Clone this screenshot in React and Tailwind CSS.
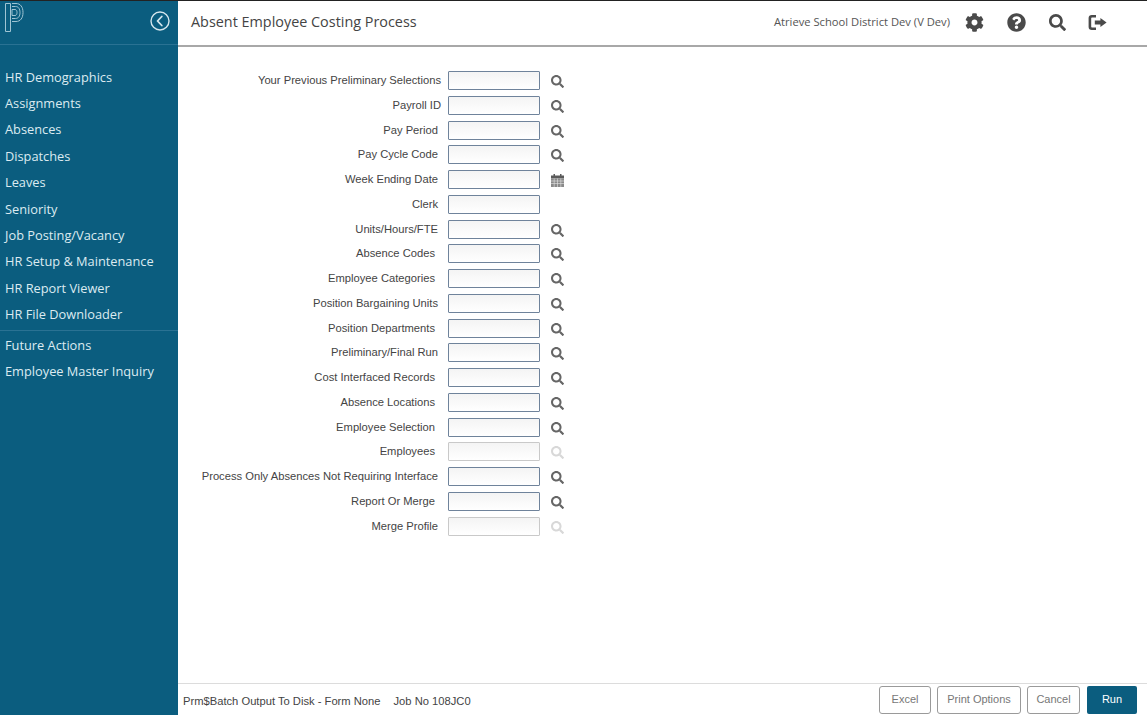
import React from 'react';
import { FaCog, FaQuestionCircle, FaSearch } from 'react-icons/fa';

const navTop = ['HR Demographics', 'Assignments', 'Absences', 'Dispatches', 'Leaves', 'Seniority', 'Job Posting/Vacancy', 'HR Setup & Maintenance', 'HR Report Viewer', 'HR File Downloader'];
const navBottom = ['Future Actions', 'Employee Master Inquiry'];

// pad = gap between label and input, it shifts a few px in the original
const fields = [
    { label: 'Your Previous Preliminary Selections', pad: 'pr-[7px]' },
    { label: 'Payroll ID', pad: 'pr-[7px]' },
    { label: 'Pay Period', pad: 'pr-[10px]' },
    { label: 'Pay Cycle Code', pad: 'pr-[10px]' },
    { label: 'Week Ending Date', pad: 'pr-[10px]', icon: 'calendar' },
    { label: 'Clerk', pad: 'pr-[10px]', icon: 'none' },
    { label: 'Units/Hours/FTE', pad: 'pr-[10px]' },
    { label: 'Absence Codes', pad: 'pr-[13px]' },
    { label: 'Employee Categories', pad: 'pr-[13px]' },
    { label: 'Position Bargaining Units', pad: 'pr-[10px]' },
    { label: 'Position Departments', pad: 'pr-[13px]' },
    { label: 'Preliminary/Final Run', pad: 'pr-[10px]' },
    { label: 'Cost Interfaced Records', pad: 'pr-[13px]' },
    { label: 'Absence Locations', pad: 'pr-[13px]' },
    { label: 'Employee Selection', pad: 'pr-[13px]' },
    { label: 'Employees', pad: 'pr-[13px]', disabled: true },
    { label: 'Process Only Absences Not Requiring Interface', pad: 'pr-[10px]' },
    { label: 'Report Or Merge', pad: 'pr-[13px]' },
    { label: 'Merge Profile', pad: 'pr-[10px]', disabled: true },
];

const Logo = () => (
    <svg width="20" height="32" viewBox="0 0 20 32" fill="none" stroke="#9fc4d3" strokeWidth="1">
        <path d="M1.5 2.5V30.5H6.5V2.5Z" />
        <path d="M8 2.5H12C16.5 2.5 19 6 19 11.5C19 17 16.5 20.5 12 20.5H8" />
        <path d="M8 5.5H11.5C14.5 5.5 16 8 16 11.5C16 15 14.5 17.5 11.5 17.5H8" />
        <path d="M8 8.5H11C12.5 8.5 13 10 13 11.5C13 13 12.5 14.5 11 14.5H8Z" />
    </svg>
);

const BackCircle = () => (
    <svg width="20" height="20" viewBox="0 0 20 20" fill="none" stroke="#d5e6ed">
        <circle cx="10" cy="10" r="9" strokeWidth="1.4" />
        <path d="M11.8 5.5L7.5 10L11.8 14.5" strokeWidth="1.8" strokeLinecap="round" strokeLinejoin="round" />
    </svg>
);

const SignOut = () => (
    <svg width="20" height="18" viewBox="0 0 20 18" fill="#4a4a4a">
        <path d="M8 1H3.8C1.8 1 .6 2.2.6 4V13C.6 14.8 1.8 16 3.8 16H8V13.4H4.3C3.6 13.4 3.2 13 3.2 12.4V4.6C3.2 4 3.6 3.6 4.3 3.6H8Z" />
        <path d="M12.4 4L18.6 8.5L12.4 13V10.5H6.8V6.5H12.4Z" />
    </svg>
);

const CalendarIcon = () => (
    <svg width="13" height="13" viewBox="0 0 13 13">
        <path d="M2.5 0H4V1.5H9V0H10.5V1.5H13V4.5H0V1.5H2.5Z" fill="#5a5a5a" />
        <rect x="0" y="4.5" width="13" height="8.5" fill="#8a8a8a" />
        <path d="M0 7H13M0 9.5H13M3.2 4.5V13M6.5 4.5V13M9.8 4.5V13" stroke="#e4e4e4" strokeWidth=".6" />
    </svg>
);

const Field = ({ label, pad, icon = 'search', disabled }) => (
    <div className="flex h-[24.78px] items-start">
        <label className={`w-[270px] pt-px text-right text-[11.2px] leading-[17px] text-[#444] ${pad}`}>{label}</label>
        <input
            disabled={disabled}
            className={`h-[19px] w-[92px] rounded-[1px] border bg-gradient-to-b from-[#f4f4f4] to-white ${disabled ? 'border-[#c9c9c9]' : 'border-[#6f839b]'}`}
        />
        <div className="ml-[10px] flex h-[21px] w-[15px] items-center justify-center">
            {icon === 'search' && <FaSearch size={13} className={disabled ? 'text-[#d8d8d8]' : 'text-[#666]'} />}
            {icon === 'calendar' && <CalendarIcon />}
        </div>
    </div>
);

const FooterButton = ({ children, className }) => (
    <button className={`h-[28px] rounded-[3px] border border-[#9a9a9a] bg-white text-[11px] text-[#777] ${className}`}>
        {children}
    </button>
);

const App = () => {
    return (
        <div className="flex h-screen w-full flex-col overflow-hidden bg-white font-['Liberation_Sans',sans-serif]">
            <div className="h-px w-full bg-[#222]" />
            <div className="flex min-h-0 flex-1">
                <aside className="flex w-[178px] shrink-0 flex-col bg-[#0b5d7f] font-['Open_Sans',sans-serif] text-[12.8px] font-medium text-[#dcebf1]">
                    <div className="flex h-[44px] items-start justify-between border-b border-[#2a7293] pl-[4px] pr-[8px]">
                        <Logo />
                        <div className="mt-[10px]"><BackCircle /></div>
                    </div>
                    <nav className="border-b border-[#2a7293] pt-[19px] pb-[2px]">
                        {navTop.map((item) => (
                            <div key={item} className="flex h-[26.4px] items-center pl-[5px]">{item}</div>
                        ))}
                    </nav>
                    <nav className="pt-[1px]">
                        {navBottom.map((item) => (
                            <div key={item} className="flex h-[26.4px] items-center pl-[5px]">{item}</div>
                        ))}
                    </nav>
                </aside>

                <main className="flex min-w-0 flex-1 flex-col">
                    <header className="flex h-[46px] shrink-0 items-center border-b-2 border-[#a8a8a8] pl-[13px] pr-[39px] font-['Open_Sans',sans-serif]">
                        <h1 className="mb-[3px] text-[14.4px] text-[#444]">Absent Employee Costing Process</h1>
                        <div className="mb-[1px] ml-auto flex items-center text-[#4a4a4a]">
                            <span className="mr-[15px] text-[11.2px] text-[#555]">Atrieve School District Dev (V Dev)</span>
                            <FaCog size={19} />
                            <FaQuestionCircle size={19} className="ml-[23px]" />
                            <FaSearch size={17} className="ml-[23px]" />
                            <div className="ml-[22px]"><SignOut /></div>
                        </div>
                    </header>

                    <section className="min-h-0 flex-1 pt-[24px]">
                        {fields.map((f) => (
                            <Field key={f.label} {...f} />
                        ))}
                    </section>

                    <footer className="flex h-[32px] shrink-0 items-center border-t border-[#dcdcdc] pl-[5px] pr-[10px] text-[11.2px] text-[#444]">
                        <span className="mt-[3px]">Prm$Batch Output To Disk - Form None</span>
                        <span className="ml-[13px] mt-[3px]">Job No 108JC0</span>
                        <div className="ml-auto flex gap-[6px]">
                            <FooterButton className="w-[52px]">Excel</FooterButton>
                            <FooterButton className="w-[84px]">Print Options</FooterButton>
                            <FooterButton className="w-[53px]">Cancel</FooterButton>
                            <button className="ml-px h-[28px] w-[50px] rounded-[2px] bg-[#0b5d7f] text-[11px] text-white">Run</button>
                        </div>
                    </footer>
                </main>
            </div>
        </div>
    );
};

export default App;
